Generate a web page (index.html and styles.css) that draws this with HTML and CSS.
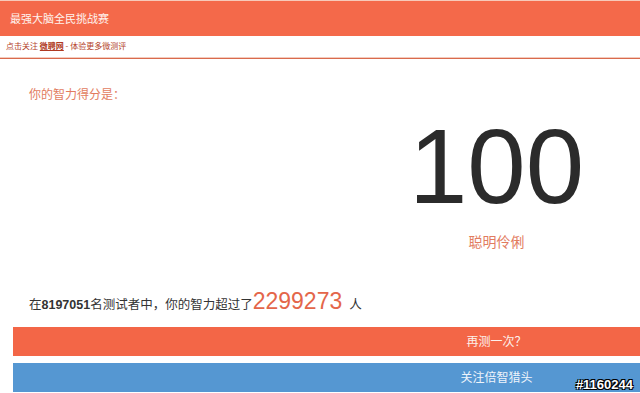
FILE: index.html
```html
<!DOCTYPE html>
<html lang="zh-CN">
<head>
<meta charset="utf-8">
<title>最强大脑全民挑战赛</title>
<link rel="stylesheet" href="styles.css">
</head>
<body>
<div class="page">
  <header class="topbar">最强大脑全民挑战赛</header>
  <div class="subbar">点击关注 <a class="sublink" href="#">微聘网</a> - 体验更多微测评</div>
  <main class="result">
    <p class="score-label">你的智力得分是：</p>
    <div class="score">100</div>
    <div class="rank">聪明伶俐</div>
    <p class="summary">在<b class="total">8197051</b>名测试者中，你的智力超过了<span class="beat">2299273</span><span class="unit">人</span></p>
    <div class="actions">
      <a class="btn btn-retry" href="#">再测一次？</a>
      <a class="btn btn-follow" href="#">关注倍智猎头</a>
    </div>
  </main>
</div>
<div class="watermark">#1160244</div>
</body>
</html>
```
FILE: styles.css
```css
html, body {
  margin: 0;
  padding: 0;
  overflow: hidden;
  background: #ffffff;
}
body {
  font-family: "Noto Sans CJK SC", "Liberation Sans", sans-serif;
  color: #333333;
  width: 640px;
  height: 393px;
  position: relative;
}
.page {
  width: 993px;
  border-top: 1px solid #f7c9b9;
}
.topbar {
  background: #f4694a;
  color: #fff3ee;
  height: 35px;
  line-height: 34px;
  padding-left: 10px;
  font-size: 11px;
}
.subbar {
  height: 21px;
  line-height: 20px;
  padding-left: 6px;
  font-size: 8px;
  color: #b4422a;
  border-bottom: 1px solid #f4cbbd;
  box-shadow: 0 1px 0 #d96a4d;
}
.sublink {
  color: #b03a22;
  font-weight: bold;
  text-decoration: underline;
}
.result {
  padding: 26px 13px 0 13px;
}
.score-label {
  margin: 0;
  padding-left: 16px;
  font-size: 12px;
  line-height: 20px;
  color: #e27c60;
}
.score {
  margin-top: 10px;
  height: 105px;
  text-align: center;
  font-family: "Liberation Sans", Arial, sans-serif;
  font-size: 105px;
  line-height: 105px;
  color: #2b2b2b;
}
.rank {
  margin-top: 12px;
  text-align: center;
  font-size: 14px;
  line-height: 20px;
  color: #e27c60;
}
.summary {
  margin: 39px 0 0 0;
  padding-left: 16px;
  height: 24px;
  font-size: 12.5px;
  line-height: 24px;
  color: #333333;
}
.total {
  font-family: "Liberation Sans", Arial, sans-serif;
  font-weight: bold;
}
.beat {
  font-family: "Liberation Sans", Arial, sans-serif;
  font-size: 23px;
  line-height: 1;
  color: #e4664a;
}
.unit {
  margin-left: 7px;
}
.actions {
  margin-top: 13px;
  display: flex;
  flex-direction: column;
  gap: 7px;
}
.btn {
  display: block;
  height: 29px;
  line-height: 28px;
  text-align: center;
  font-size: 12px;
  color: #fdf1ec;
  text-decoration: none;
}
.btn-retry {
  background: #f36647;
}
.btn-follow {
  background: #5597d2;
  color: #eef4fb;
}
.watermark {
  position: absolute;
  right: 7px;
  bottom: 1px;
  font-family: "Liberation Sans", Arial, sans-serif;
  font-weight: bold;
  font-size: 13px;
  line-height: 14px;
  color: #ffffff;
  text-shadow: -1px -1px 0 #000, 1px -1px 0 #000, -1px 1px 0 #000, 1px 1px 0 #000;
}
```
